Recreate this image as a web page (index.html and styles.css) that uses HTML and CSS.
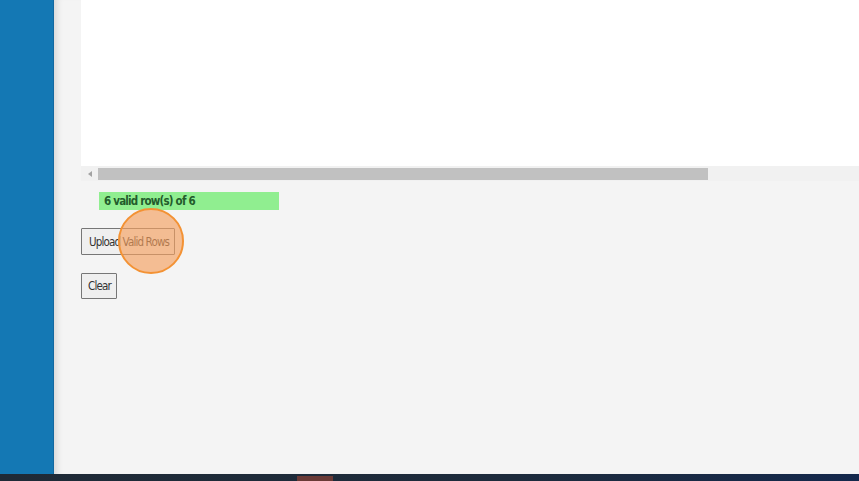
FILE: index.html
```html
<!DOCTYPE html>
<html>
<head>
<meta charset="utf-8">
<link rel="stylesheet" href="styles.css">
</head>
<body>
<div class="app">
  <aside class="sidebar"></aside>
  <main class="main">
    <div class="table-panel"></div>
    <div class="hscroll">
      <div class="hscroll-btn"><span class="arrow-left"></span></div>
      <div class="hscroll-thumb"></div>
    </div>
    <div class="status">6 valid row(s) of 6</div>
    <div class="actions">
      <button class="btn">Upload Valid Rows</button>
      <button class="btn">Clear</button>
    </div>
    <div class="click-marker"></div>
  </main>
</div>
<div class="taskbar"><span class="task-item"></span></div>
</body>
</html>
```

FILE: styles.css
```css
html, body {
  margin: 0;
  padding: 0;
  width: 859px;
  height: 481px;
  overflow: hidden;
  font-family: "DejaVu Sans Condensed", "Liberation Sans", sans-serif;
}
.app {
  display: flex;
  height: 474px;
}
.sidebar {
  width: 54px;
  flex: none;
  background: #1478b4;
  box-shadow: inset -1px 0 0 #1268a0;
}
.main {
  position: relative;
  flex: 1;
  background: #f4f4f4;
  padding-left: 27px;
  box-shadow: inset 8px 0 6px -5px rgba(0,0,0,0.12);
}
.table-panel {
  height: 166px;
  background: #ffffff;
}
.hscroll {
  display: flex;
  align-items: center;
  height: 15px;
  background: #f1f1f1;
}
.hscroll-btn {
  width: 17px;
  height: 15px;
  display: flex;
  align-items: center;
  justify-content: center;
}
.arrow-left {
  width: 0;
  height: 0;
  border-top: 3px solid transparent;
  border-bottom: 3px solid transparent;
  border-right: 4px solid #a3a3a3;
}
.hscroll-thumb {
  width: 610px;
  height: 12px;
  background: #c1c1c1;
}
.status {
  margin: 11px 0 0 18px;
  width: 175px;
  height: 18px;
  line-height: 19px;
  padding-left: 5px;
  background: #90ee90;
  color: #235c2c;
  font-size: 11.5px;
  font-weight: 700;
  letter-spacing: -0.8px;
}
.actions {
  display: flex;
  flex-direction: column;
  align-items: flex-start;
  gap: 18px;
  margin-top: 18px;
}
.btn {
  height: 27px;
  padding: 0 5px 0 7px;
  background: #efefef;
  border: 1px solid #767676;
  border-radius: 1px;
  color: #333;
  font-family: "DejaVu Sans Condensed", "Liberation Sans", sans-serif;
  font-size: 11.5px;
  letter-spacing: -0.85px;
}
.btn + .btn {
  height: 26px;
  padding: 0 5px 0 6px;
}
.click-marker {
  position: absolute;
  left: 64px;
  top: 208px;
  width: 62px;
  height: 62px;
  border-radius: 50%;
  border: 2px solid #f39234;
  background: rgba(245, 160, 95, 0.65);
}
.taskbar {
  height: 7px;
  background: linear-gradient(90deg, #1f2a36 0%, #1d2b3c 60%, #14284c 100%);
  position: relative;
}
.task-item {
  position: absolute;
  left: 297px;
  top: 2px;
  width: 36px;
  height: 5px;
  background: #6a3a36;
}
```
